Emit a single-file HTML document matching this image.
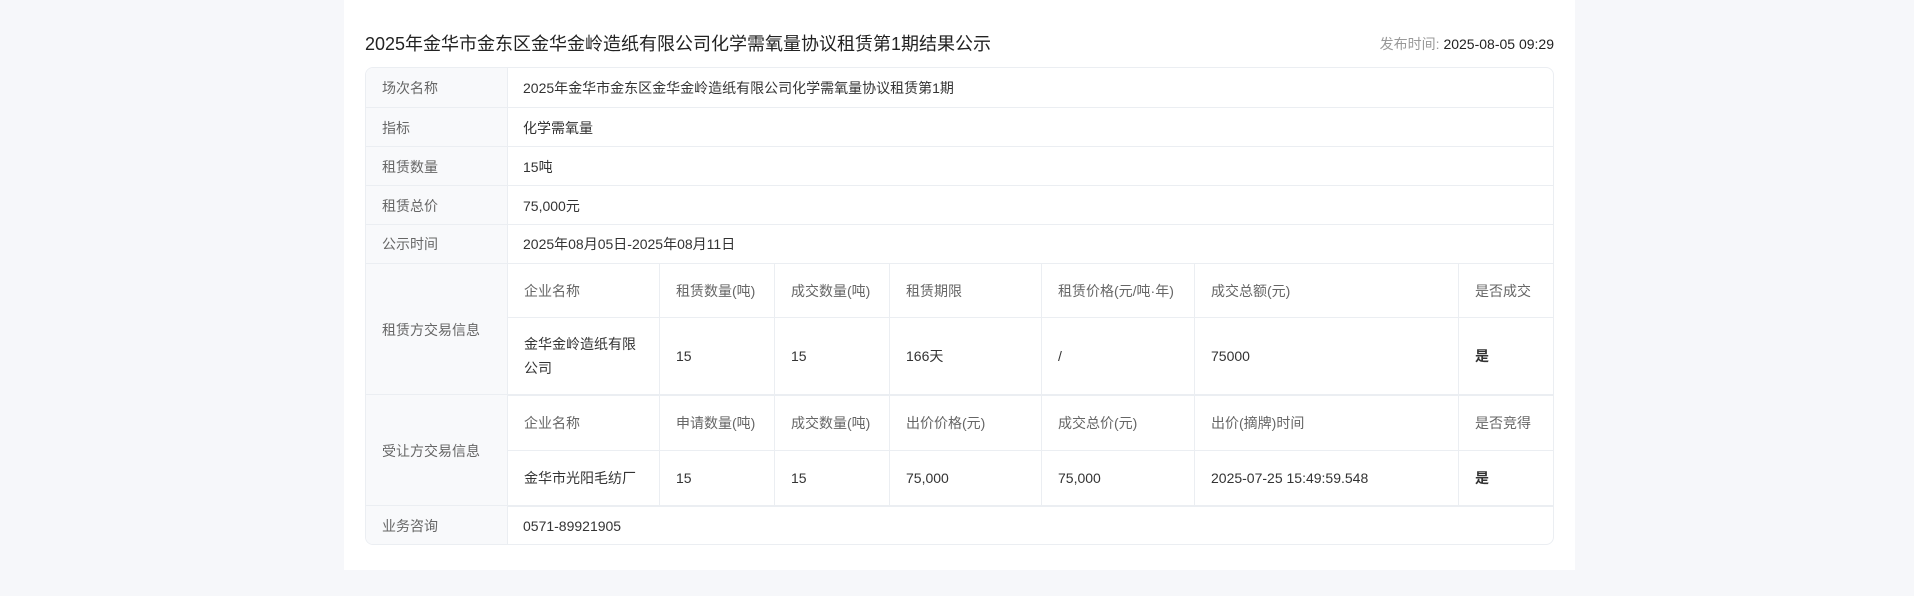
<!DOCTYPE html>
<html><head><meta charset="utf-8"><style>
*{margin:0;padding:0;box-sizing:border-box}
body{width:1914px;height:596px;background:#f6f7fa;font-family:"Liberation Sans","Noto Sans CJK SC",sans-serif;position:relative;overflow:hidden;color:#333}
.card{position:absolute;left:344px;top:0;width:1231px;height:570px;background:#fff}
.title{position:absolute;left:365px;top:32px;font-size:18px;color:#222;line-height:24px;white-space:nowrap}
.pub{position:absolute;right:360px;top:34px;font-size:14px;line-height:20px;color:#222}
.pub span{color:#999}
.tbl{position:absolute;left:365px;top:67px;width:1189px;height:478px;border:1px solid #ebeef2;border-radius:8px;overflow:hidden}
.lab{position:absolute;left:0;width:142px;background:#f8f9fb;border-right:1px solid #ebeef2;color:#666;font-size:14px;padding-left:16px;display:flex;align-items:center}
.val{position:absolute;left:142px;right:0;font-size:14px;padding-left:15px;display:flex;align-items:center;color:#333}
.hl{position:absolute;left:0;right:0;height:1px;background:#ebeef2}
.c{position:absolute;font-size:14px;padding-left:16px;display:flex;align-items:center;border-right:1px solid #ebeef2;border-bottom:1px solid #ebeef2;line-height:24px}
.h{color:#666}
.d{color:#333}
.b{font-weight:bold}
</style></head><body>
<div class="card"></div>
<div class="title">2025年金华市金东区金华金岭造纸有限公司化学需氧量协议租赁第1期结果公示</div>
<div class="pub"><span>发布时间: </span>2025-08-05 09:29</div>
<div class="tbl">
<div class="lab" style="top:0;height:39px">场次名称</div><div class="val" style="top:0;height:39px">2025年金华市金东区金华金岭造纸有限公司化学需氧量协议租赁第1期</div>
<div class="hl" style="top:39px"></div>
<div class="lab" style="top:40px;height:39px">指标</div><div class="val" style="top:40px;height:39px">化学需氧量</div>
<div class="hl" style="top:78px"></div>
<div class="lab" style="top:79px;height:39px">租赁数量</div><div class="val" style="top:79px;height:39px">15吨</div>
<div class="hl" style="top:117px"></div>
<div class="lab" style="top:118px;height:39px">租赁总价</div><div class="val" style="top:118px;height:39px">75,000元</div>
<div class="hl" style="top:156px"></div>
<div class="lab" style="top:157px;height:38px">公示时间</div><div class="val" style="top:157px;height:38px">2025年08月05日-2025年08月11日</div>
<div class="hl" style="top:195px"></div>
<div class="lab" style="top:196px;height:131px">租赁方交易信息</div>
<div class="hl" style="top:326px"></div>
<div class="lab" style="top:327px;height:111px">受让方交易信息</div>
<div class="hl" style="top:437px"></div>
<div class="lab" style="top:438px;height:40px">业务咨询</div><div class="val" style="top:438px;height:40px">0571-89921905</div>

<!-- block 1 header -->
<div class="c h" style="left:142px;top:196px;width:152px;height:54px">企业名称</div>
<div class="c h" style="left:294px;top:196px;width:115px;height:54px">租赁数量(吨)</div>
<div class="c h" style="left:409px;top:196px;width:115px;height:54px">成交数量(吨)</div>
<div class="c h" style="left:524px;top:196px;width:152px;height:54px">租赁期限</div>
<div class="c h" style="left:676px;top:196px;width:153px;height:54px">租赁价格(元/吨·年)</div>
<div class="c h" style="left:829px;top:196px;width:264px;height:54px">成交总额(元)</div>
<div class="c h" style="left:1093px;top:196px;width:95px;height:54px">是否成交</div>
<div class="c d" style="left:142px;top:250px;width:152px;height:78px;border-bottom:2px solid #ebeef2">金华金岭造纸有限<br>公司</div>
<div class="c d" style="left:294px;top:250px;width:115px;height:78px;border-bottom:2px solid #ebeef2">15</div>
<div class="c d" style="left:409px;top:250px;width:115px;height:78px;border-bottom:2px solid #ebeef2">15</div>
<div class="c d" style="left:524px;top:250px;width:152px;height:78px;border-bottom:2px solid #ebeef2">166天</div>
<div class="c d" style="left:676px;top:250px;width:153px;height:78px;border-bottom:2px solid #ebeef2">/</div>
<div class="c d" style="left:829px;top:250px;width:264px;height:78px;border-bottom:2px solid #ebeef2">75000</div>
<div class="c d b" style="left:1093px;top:250px;width:95px;height:78px;border-bottom:2px solid #ebeef2">是</div>
<!-- block 2 -->
<div class="c h" style="left:142px;top:328px;width:152px;height:55px">企业名称</div>
<div class="c h" style="left:294px;top:328px;width:115px;height:55px">申请数量(吨)</div>
<div class="c h" style="left:409px;top:328px;width:115px;height:55px">成交数量(吨)</div>
<div class="c h" style="left:524px;top:328px;width:152px;height:55px">出价价格(元)</div>
<div class="c h" style="left:676px;top:328px;width:153px;height:55px">成交总价(元)</div>
<div class="c h" style="left:829px;top:328px;width:264px;height:55px">出价(摘牌)时间</div>
<div class="c h" style="left:1093px;top:328px;width:95px;height:55px">是否竞得</div>
<div class="c d" style="left:142px;top:383px;width:152px;height:56px;border-bottom:2px solid #ebeef2">金华市光阳毛纺厂</div>
<div class="c d" style="left:294px;top:383px;width:115px;height:56px;border-bottom:2px solid #ebeef2">15</div>
<div class="c d" style="left:409px;top:383px;width:115px;height:56px;border-bottom:2px solid #ebeef2">15</div>
<div class="c d" style="left:524px;top:383px;width:152px;height:56px;border-bottom:2px solid #ebeef2">75,000</div>
<div class="c d" style="left:676px;top:383px;width:153px;height:56px;border-bottom:2px solid #ebeef2">75,000</div>
<div class="c d" style="left:829px;top:383px;width:264px;height:56px;border-bottom:2px solid #ebeef2">2025-07-25 15:49:59.548</div>
<div class="c d b" style="left:1093px;top:383px;width:95px;height:56px;border-bottom:2px solid #ebeef2">是</div>
</div>
</body></html>
